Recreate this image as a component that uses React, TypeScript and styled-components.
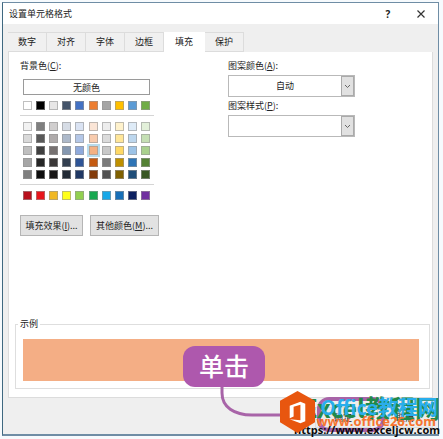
import React from "react";
import styled, { createGlobalStyle } from "styled-components";

const GlobalStyle = createGlobalStyle`
  * { box-sizing: border-box; }
  body {
    margin: 0;
    background: #f6fafd;
    color: #222;
    font: 9px/12px "Noto Sans CJK SC", "Liberation Sans", sans-serif;
  }
  button, select { font: inherit; color: inherit; margin: 0; padding: 0; }
`;

const Page = styled.main`
  padding: 2px 4px 3px 2px;
`;

const Dialog = styled.section`
  position: relative;
  border: 1px solid #6f8da5;
  border-left-color: #3f6880;
  border-bottom: 2px solid #6f8da5;
  background: #efefef;
`;

const TitleBar = styled.header`
  display: flex;
  align-items: center;
  height: 21px;
  padding: 0 12px 0 6px;
  background: #fff;
`;

const Title = styled.h1`
  flex: 1;
  margin: 0;
  font-size: 9px;
  font-weight: 400;
`;

const TitleButton = styled.button`
  display: flex;
  align-items: center;
  justify-content: center;
  width: 10px;
  height: 16px;
  margin-left: 23px;
  border: 0;
  background: none;
  font: 700 10px/16px "Open Sans", sans-serif;
`;

const TabList = styled.div`
  display: flex;
  padding: 8px 0 0 5px;
`;

const Tab = styled.button<{ $active?: boolean }>`
  width: ${(p) => (p.$active ? 41 : 39)}px;
  height: 20px;
  border: 1px solid ${(p) => (p.$active ? "#fff" : "#dcdcdc")};
  border-left-width: 0;
  background: ${(p) => (p.$active ? "#fff" : "#f0f0f0")};
`;

const Panel = styled.div`
  margin: 0 5px;
  padding: 8px 2px 8px 6px;
  border: 1px solid #dcdcdc;
  border-top: 0;
  background: #fff;
`;

const Columns = styled.div`
  display: flex;
  min-height: 258px;
  padding-left: 5px;
`;

const ColorColumn = styled.div`
  width: 208px;
`;

const PatternColumn = styled.div`
  width: 127px;
`;

const Label = styled.label`
  display: block;
  height: 12px;
`;

const ColorArea = styled.div`
  width: 134px;
`;

const NoColor = styled.button`
  display: block;
  width: 127px;
  height: 16px;
  margin: 7px 3px 0;
  border: 1px solid #9a9a9a;
  background: #fff;
  line-height: 13px;
`;

const Swatches = styled.div<{ $divided?: boolean }>`
  display: grid;
  grid-template-columns: repeat(10, 9px);
  justify-content: space-between;
  row-gap: 3px;
  padding: 6px 4px 5px 3px;
  border-bottom: ${(p) => (p.$divided ? "1px solid #d5d5d5" : "0")};
`;

const Swatch = styled.button<{ $color: string; $selected?: boolean }>`
  width: 9px;
  height: 9px;
  border: 1px solid rgba(150, 150, 150, 0.6);
  background: ${(p) => p.$color};
  outline: ${(p) => (p.$selected ? "2px solid #b9dcec" : "0")};
`;

const ButtonRow = styled.div`
  display: flex;
  gap: 7px;
  margin-top: 10px;
`;

const PushButton = styled.button<{ $wide?: boolean }>`
  width: ${(p) => (p.$wide ? 69 : 63)}px;
  height: 21px;
  border: 1px solid #b5b5b5;
  background: #e2e2e2;
  white-space: nowrap;
`;

const FooterButton = styled(PushButton)`
  width: 56px;
  border-color: #dcdcdc;
  background: #ebebeb;
`;

const Combo = styled.div`
  display: grid;
  grid-template-columns: 1fr 13px;
  align-items: stretch;
  height: 22px;
  margin: 3px 0;
  border: 1px solid #b9b9b9;
`;

const Select = styled.select`
  grid-area: 1 / 1 / 2 / 3;
  appearance: none;
  border: 0;
  padding-right: 13px;
  background: #fff;
  text-align: center;
  text-align-last: center;
`;

const Arrow = styled.span`
  grid-area: 1 / 2;
  display: flex;
  align-items: center;
  justify-content: center;
  border: 1px solid #aaa;
  background: #e1e1e1;
  pointer-events: none;
`;

const Example = styled.fieldset`
  margin: 0;
  padding: 9px 10px 7px 7px;
  border: 1px solid #dedede;
`;

const Legend = styled.legend`
  margin-left: -5px;
  padding: 0 2px;
`;

const Preview = styled.div`
  height: 42px;
  background: #f4ae85;
`;

const Footer = styled.footer`
  display: flex;
  justify-content: flex-end;
  align-items: flex-start;
  gap: 6px;
  height: 36px;
  padding: 9px 5px 0;
`;

const Callout = styled.div`
  position: absolute;
  left: 180px;
  bottom: 47px;
  width: 82px;
  height: 41px;
  border-radius: 12px;
  background: #ae58ad;
  color: #fff;
  font-size: 25px;
  font-weight: 500;
  line-height: 39px;
  text-align: center;
`;

const Connector = styled.svg`
  position: absolute;
  left: 215px;
  bottom: 0;
`;

const Mark = styled.span<{ $right: number; $bottom: number; $size: number; $color: string }>`
  position: absolute;
  right: ${(p) => p.$right}px;
  bottom: ${(p) => p.$bottom}px;
  color: ${(p) => p.$color};
  font-size: ${(p) => p.$size}px;
  font-weight: 700;
  line-height: 1;
  white-space: nowrap;
`;

const LatinMark = styled(Mark)`
  font-family: "Open Sans", "Noto Sans", sans-serif;
`;

const Logo = styled.svg`
  position: absolute;
  right: 123px;
  bottom: 1px;
`;

const tabs = ["数字", "对齐", "字体", "边框", "填充", "保护"];

const theme = ["#ffffff", "#000000", "#e7e6e6", "#44546a", "#4472c4", "#ed7d31", "#a5a5a5", "#ffc000", "#5b9bd5", "#70ad47"];

const shades = [
  "#f2f2f2", "#7f7f7f", "#d0cece", "#d6dce5", "#dae3f3", "#fbe5d6", "#ededed", "#fff2cc", "#deebf7", "#e2f0d9",
  "#d9d9d9", "#595959", "#afabab", "#adb9ca", "#b4c7e7", "#f8cbad", "#dbdbdb", "#ffe699", "#bdd7ee", "#c5e0b4",
  "#bfbfbf", "#404040", "#767171", "#8497b0", "#8faadc", "#f4b183", "#c9c9c9", "#ffd966", "#9dc3e6", "#a9d18e",
  "#a6a6a6", "#262626", "#3b3838", "#333f50", "#2f5597", "#c55a11", "#7b7b7b", "#bf9000", "#2e75b6", "#548235",
  "#7f7f7f", "#0d0d0d", "#181717", "#222a35", "#203864", "#843c0c", "#525252", "#7f6000", "#1f4e79", "#385723",
];

const standard = ["#b8101c", "#e8151c", "#f0b824", "#ffff1a", "#92d050", "#18a850", "#18a8e8", "#1870b8", "#0c2060", "#7030a0"];

const Chevron = () => (
  <svg width="7" height="5" viewBox="0 0 7 5" fill="none" stroke="#666">
    <path d="M1 1l2.5 2.5L6 1" />
  </svg>
);

export default function App() {
  return (
    <Page>
      <GlobalStyle />
      <Dialog aria-label="设置单元格格式">
        <TitleBar>
          <Title>设置单元格格式</Title>
          <TitleButton aria-label="帮助">?</TitleButton>
          <TitleButton aria-label="关闭">
            <svg width="8" height="8" viewBox="0 0 8 8" stroke="#333" strokeWidth="1.2">
              <path d="M.5.5l7 7M7.5.5l-7 7" />
            </svg>
          </TitleButton>
        </TitleBar>
        <TabList role="tablist">
          {tabs.map((name) => (
            <Tab key={name} role="tab" aria-selected={name === "填充"} $active={name === "填充"}>
              {name}
            </Tab>
          ))}
        </TabList>
        <Panel role="tabpanel">
          <Columns>
            <ColorColumn>
              <Label htmlFor="no-color">背景色(<u>C</u>):</Label>
              <ColorArea>
                <NoColor id="no-color">无颜色</NoColor>
                <Swatches $divided>
                  {theme.map((c) => <Swatch key={c} $color={c} aria-label={c} />)}
                </Swatches>
                <Swatches $divided>
                  {shades.map((c, i) => (
                    <Swatch key={i} $color={c} $selected={i === 25} aria-label={c} />
                  ))}
                </Swatches>
                <Swatches>
                  {standard.map((c) => <Swatch key={c} $color={c} aria-label={c} />)}
                </Swatches>
              </ColorArea>
              <ButtonRow>
                <PushButton>填充效果(<u>I</u>)...</PushButton>
                <PushButton $wide>其他颜色(<u>M</u>)...</PushButton>
              </ButtonRow>
            </ColorColumn>
            <PatternColumn>
              <Label htmlFor="pattern-color">图案颜色(<u>A</u>):</Label>
              <Combo>
                <Select id="pattern-color"><option>自动</option></Select>
                <Arrow><Chevron /></Arrow>
              </Combo>
              <Label htmlFor="pattern-style">图案样式(<u>P</u>):</Label>
              <Combo>
                <Select id="pattern-style"><option></option></Select>
                <Arrow><Chevron /></Arrow>
              </Combo>
            </PatternColumn>
          </Columns>
          <Example>
            <Legend>示例</Legend>
            <Preview />
          </Example>
        </Panel>
        <Footer>
          <FooterButton>确定</FooterButton>
          <FooterButton>取消</FooterButton>
        </Footer>
        <Connector width="220" height="56" viewBox="0 0 220 56" fill="none" stroke="#a864a8" strokeWidth="3">
          <path d="M4 4v11c0 14 12 22 30 22h64" />
          <rect x="101" y="21" width="64" height="31" rx="10" strokeWidth="4" />
        </Connector>
        <Callout>单击</Callout>
        <Mark $right={-2} $bottom={14} $size={25} $color="#21894a">Excel教程网</Mark>
        <Mark $right={0} $bottom={17} $size={20} $color="#29aeec">Office教程网</Mark>
        <LatinMark $right={-2} $bottom={-1} $size={11} $color="#0a0a0a">https://www.exceljcw.com</LatinMark>
        <LatinMark $right={2} $bottom={6} $size={13} $color="#f7742e">www.office26.com</LatinMark>
        <Logo width="35" height="42" viewBox="0 0 36 43" aria-label="Office">
          <path d="M18 0l18 10v22L18 43 0 32V10z" fill="#e8560f" />
          <path fillRule="evenodd" d="M10 15l11-4 5 2v18l-5 2-11-4 11 1V14l-7 2v10l-4 2z" fill="#fff" />
        </Logo>
      </Dialog>
    </Page>
  );
}
